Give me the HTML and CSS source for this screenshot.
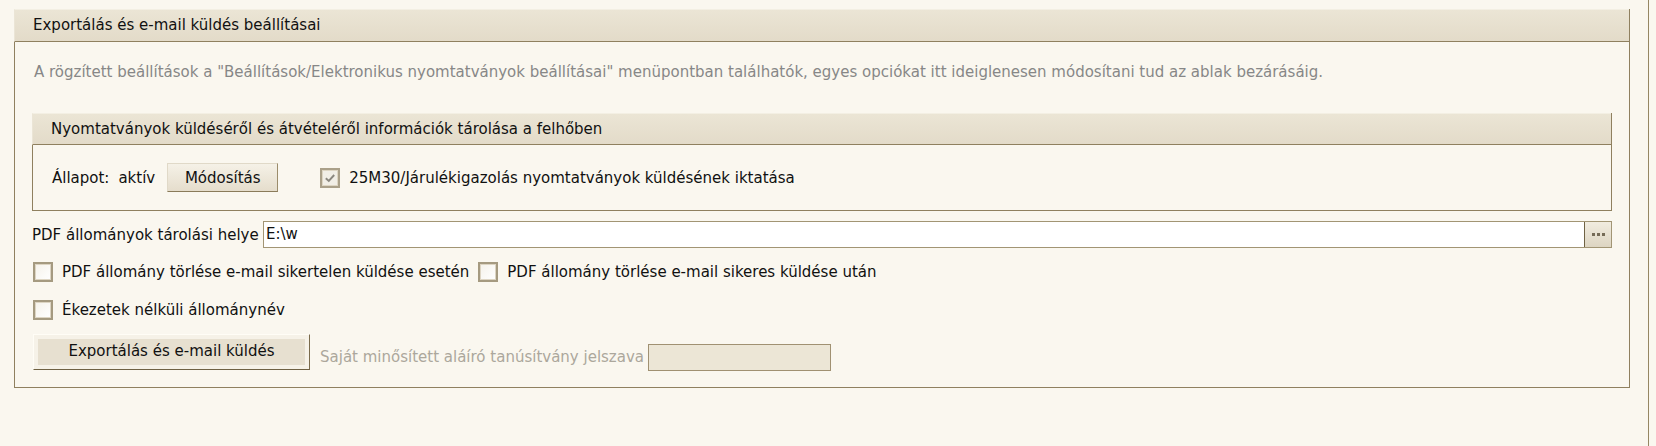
FILE: index.html
```html
<!DOCTYPE html>
<html lang="hu">
<head>
<meta charset="utf-8">
<title>Exportálás és e-mail küldés beállításai</title>
<link rel="stylesheet" href="styles.css">
</head>
<body>
<div class="page">
  <main class="content">
    <section class="panel">
      <header class="panel-head">Exportálás és e-mail küldés beállításai</header>
      <div class="panel-body">
        <p class="desc">A rögzített beállítások a "Beállítások/Elektronikus nyomtatványok beállításai" menüpontban találhatók, egyes opciókat itt ideiglenesen módosítani tud az ablak bezárásáig.</p>

        <section class="subpanel">
          <header class="subpanel-head">Nyomtatványok küldéséről és átvételéről információk tárolása a felhőben</header>
          <div class="subpanel-body">
            <span class="status-label">Állapot:</span>
            <span class="status-value">aktív</span>
            <button class="btn btn-small">Módosítás</button>
            <label class="check check-disabled check-wide">
              <span class="box box-checked">
                <svg viewBox="0 0 12 12" width="12" height="12"><path d="M1.8 6.2 L4.8 9 L10.2 3" fill="none" stroke="#8a877f" stroke-width="1.9"/></svg>
              </span>
              <span>25M30/Járulékigazolás nyomtatványok küldésének iktatása</span>
            </label>
          </div>
        </section>

        <div class="path-row">
          <span class="path-label">PDF állományok tárolási helye</span>
          <div class="path-field">
            <span class="path-input">E:\w</span>
            <span class="browse"><i></i><i></i><i></i></span>
          </div>
        </div>

        <div class="check-row">
          <label class="check"><span class="box"></span><span>PDF állomány törlése e-mail sikertelen küldése esetén</span></label>
          <label class="check check-second"><span class="box"></span><span>PDF állomány törlése e-mail sikeres küldése után</span></label>
        </div>

        <div class="check-row check-row-2">
          <label class="check"><span class="box"></span><span>Ékezetek nélküli állománynév</span></label>
        </div>

        <div class="action-row">
          <button class="btn btn-export">Exportálás és e-mail küldés</button>
          <span class="pw-label">Saját minősített aláíró tanúsítvány jelszava</span>
          <span class="pw-input"></span>
        </div>
      </div>
    </section>
  </main>
  <div class="divider"></div>
</div>
</body>
</html>
```
FILE: styles.css
```css
html, body {
  margin: 0;
  padding: 0;
  background: #faf7ef;
}
body {
  font-family: "DejaVu Sans", "Noto Sans", sans-serif;
  font-size: 15px;
  color: #111111;
}
.page {
  display: flex;
  height: 446px;
}
.content {
  width: 1648px;
  box-sizing: border-box;
  padding: 9px 18px 0 14px;
}
.divider {
  width: 1px;
  background: #968763;
}

/* outer panel */
.panel {
  border: 1px solid #8f805f;
  border-top: 0;
}
.panel-head {
  margin-left: -1px;
  height: 31px;
  line-height: 31px;
  padding-left: 18px;
  border-top: 1px solid #f3efe3;
  border-left: 1px solid #ebe5d6;
  border-bottom: 1px solid #8f805f;
  background: linear-gradient(#ebe5d5, #e3dbc9);
  white-space: nowrap;
}
.panel-body {
  padding: 20px 17px 16px 17px;
}
.desc {
  margin: 0 0 0 2px;
  line-height: 20px;
  color: #878787;
  white-space: nowrap;
}

/* inner panel */
.subpanel {
  margin-top: 31px;
  border: 1px solid #8f805f;
  border-top: 0;
}
.subpanel-head {
  margin-left: -1px;
  height: 30px;
  line-height: 30px;
  padding-left: 18px;
  border-top: 1px solid #f3efe3;
  border-left: 1px solid #ebe5d6;
  border-bottom: 1px solid #8f805f;
  background: linear-gradient(#ebe5d5, #e3dbc9);
  white-space: nowrap;
}
.subpanel-body {
  height: 65px;
  display: flex;
  align-items: center;
  padding-left: 19px;
}
.status-value {
  margin-left: 9px;
}

/* buttons */
.btn {
  font: inherit;
  color: #111111;
  padding: 0;
  cursor: default;
}
.btn-small {
  margin-left: 12px;
  width: 111px;
  height: 29px;
  border: 1px solid;
  border-color: #e0d9c8 #9b8c6b #8a7b5a #e0d9c8;
  background: linear-gradient(#f5f1e7, #e5ddcc);
}
.btn-export {
  margin-left: 1px;
  width: 277px;
  height: 36px;
  border: 1px solid;
  border-color: #fffdf6 #7a6b4c #6f6142 #fffdf6;
  background: #e7e0d0;
  box-shadow: inset 0 0 0 4px #f6f2e8;
  padding-bottom: 2px;
}

/* checkboxes */
.check {
  display: flex;
  align-items: center;
  white-space: nowrap;
}
.box {
  box-sizing: border-box;
  width: 20px;
  height: 20px;
  margin-right: 9px;
  border: 2px solid #a59a80;
  box-shadow: inset 0 0 0 1px #ddd5c3;
  background: linear-gradient(135deg, #f5f2ea, #ffffff);
  display: flex;
  align-items: center;
  justify-content: center;
}
.box-checked {
  width: 20px;
  height: 20px;
  border-color: #aaa089;
  background: #f1eee6;
}
.check-wide {
  margin-left: 42px;
}
.check-row {
  display: flex;
  margin: 14px 0 0 1px;
  height: 20px;
}
.check-row-2 {
  margin-top: 18px;
}
.check-second {
  margin-left: 9px;
}

/* path row */
.path-row {
  display: flex;
  align-items: center;
  margin-top: 10px;
  height: 27px;
}
.path-label {
  white-space: nowrap;
  width: 231px;
}
.path-field {
  flex: 1;
  display: flex;
  height: 27px;
  box-sizing: border-box;
  border: 1px solid #a29574;
  background: #ffffff;
}
.path-input {
  flex: 1;
  line-height: 25px;
  padding-left: 2px;
}
.browse {
  width: 26px;
  border-left: 1px solid #6f6244;
  background: linear-gradient(#f1ece0, #ddd5c2);
  display: flex;
  align-items: center;
  justify-content: center;
  gap: 2px;
}
.browse i {
  display: block;
  width: 3px;
  height: 3px;
  background: #756b57;
}

/* action row */
.action-row {
  display: flex;
  align-items: flex-end;
  margin-top: 14px;
}
.action-row .btn-export {
  margin-bottom: 1px;
}
.pw-label {
  margin-left: 10px;
  margin-right: 4px;
  color: #aca79c;
  white-space: nowrap;
  line-height: 27px;
}
.pw-input {
  width: 183px;
  height: 27px;
  box-sizing: border-box;
  border: 1px solid #a09172;
  background: #ece6d6;
}
```
